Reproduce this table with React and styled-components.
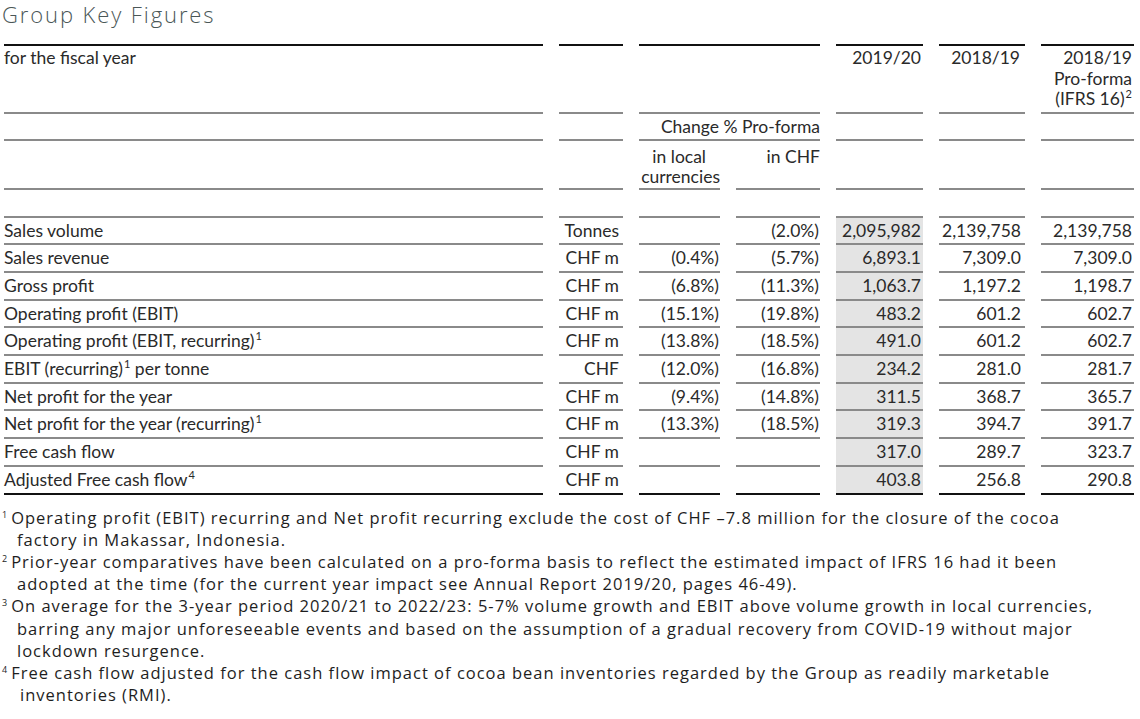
import styled, { createGlobalStyle } from "styled-components";

const GlobalStyle = createGlobalStyle`
  html, body {
    margin: 0;
    padding: 0;
    background: #ffffff;
  }
`;

const Page = styled.div`
  width: 1140px;
  padding: 0 0 0 2px;
  box-sizing: border-box;
  color: #222;
`;

const Title = styled.h1`
  margin: 0 0 16px 0;
  font-family: "Open Sans", "Noto Sans", sans-serif;
  font-weight: 300;
  font-size: 22px;
  line-height: 28px;
  color: #4a5757;
  letter-spacing: 1.9px;
`;

const Table = styled.table`
  border-collapse: separate;
  border-spacing: 16px 0;
  margin-left: -14px;
  table-layout: fixed;
  width: 1162px;
  font-family: Lato, "Open Sans", sans-serif;
  font-size: 17.5px;
  color: #2a2a2a;
`;

const Cell = styled.td`
  padding: 0;
  text-align: ${({ $align }) => $align || "right"};
  vertical-align: ${({ $valign }) => $valign || "middle"};
  line-height: 25.7px;
  white-space: nowrap;
  border-bottom: 2px solid ${({ $last }) => ($last ? "#111" : "#8a8a8a")};
  border-top: ${({ $first }) => ($first ? "2px solid #111" : "0")};
  background: ${({ $shade }) => ($shade ? "#e4e4e4" : "transparent")};
  padding-right: ${({ $pr }) => $pr || "0"};
`;

const HeadCell = styled(Cell)`
  line-height: 20.5px;
  padding-top: ${({ $pt }) => $pt || "0"};
  padding-bottom: ${({ $pb }) => $pb || "0"};
  height: ${({ $h }) => $h || "auto"};
  white-space: normal;
`;

const Indent = styled.span`
  margin-right: ${({ $mr }) => $mr};
`;

const Sup = styled.sup`
  font-size: 11px;
  line-height: 0;
  vertical-align: 7px;
  margin-left: 1px;
`;

const Notes = styled.div`
  margin-top: 12px;
  font-family: "Open Sans", "Noto Sans", sans-serif;
  font-size: 16.5px;
  letter-spacing: 1px;
  line-height: 22.2px;
  color: #1e1e1e;
`;

const Note = styled.div`
  padding-left: ${({ $indent }) => $indent || "15px"};
`;

const NoteLine = styled.div`
  white-space: nowrap;
  margin-left: ${({ $first, $indent }) => ($first ? `-${$indent || "15px"}` : "0")};
`;

const NoteMark = styled.sup`
  font-size: 9px;
  letter-spacing: 0;
  line-height: 0;
  vertical-align: 6px;
  margin-right: 4px;
`;

const rows = [
  ["Sales volume", null, "Tonnes", "", "(2.0%)", "2,095,982", "2,139,758", "2,139,758"],
  ["Sales revenue", null, "CHF m", "(0.4%)", "(5.7%)", "6,893.1", "7,309.0", "7,309.0"],
  ["Gross profit", null, "CHF m", "(6.8%)", "(11.3%)", "1,063.7", "1,197.2", "1,198.7"],
  ["Operating profit (EBIT)", null, "CHF m", "(15.1%)", "(19.8%)", "483.2", "601.2", "602.7"],
  ["Operating profit (EBIT, recurring)", "1", "CHF m", "(13.8%)", "(18.5%)", "491.0", "601.2", "602.7"],
  ["EBIT (recurring)", "1", "CHF", "(12.0%)", "(16.8%)", "234.2", "281.0", "281.7", " per tonne"],
  ["Net profit for the year", null, "CHF m", "(9.4%)", "(14.8%)", "311.5", "368.7", "365.7"],
  ["Net profit for the year (recurring)", "1", "CHF m", "(13.3%)", "(18.5%)", "319.3", "394.7", "391.7"],
  ["Free cash flow", null, "CHF m", "", "", "317.0", "289.7", "323.7"],
  ["Adjusted Free cash flow", "4", "CHF m", "", "", "403.8", "256.8", "290.8"],
];

const notes = [
  {
    n: "1",
    lines: [
      "Operating profit (EBIT) recurring and Net profit recurring exclude the cost of CHF –7.8 million for the closure of the cocoa",
      "factory in Makassar, Indonesia.",
    ],
  },
  {
    n: "2",
    lines: [
      "Prior-year comparatives have been calculated on a pro-forma basis to reflect the estimated impact of IFRS 16 had it been",
      "adopted at the time (for the current year impact see Annual Report 2019/20, pages 46-49).",
    ],
  },
  {
    n: "3",
    lines: [
      "On average for the 3-year period 2020/21 to 2022/23: 5-7% volume growth and EBIT above volume growth in local currencies,",
      "barring any major unforeseeable events and based on the assumption of a gradual recovery from COVID-19 without major",
      "lockdown resurgence.",
    ],
  },
  {
    n: "4",
    indent: "18px",
    lines: [
      "Free cash flow adjusted for the cash flow impact of cocoa bean inventories regarded by the Group as readily marketable",
      "inventories (RMI).",
    ],
  },
];

export default function App() {
  return (
    <>
      <GlobalStyle />
      <Page>
        <Title>Group Key Figures</Title>
        <Table>
          <colgroup>
            <col style={{ width: 539 }} />
            <col style={{ width: 64 }} />
            <col style={{ width: 81 }} />
            <col style={{ width: 84 }} />
            <col style={{ width: 87 }} />
            <col style={{ width: 86 }} />
            <col style={{ width: 93 }} />
          </colgroup>
          <tbody>
            <tr>
              <HeadCell $first $align="left" $valign="top" $pt="2px" $pb="2px">
                for the fiscal year
              </HeadCell>
              <HeadCell $first />
              <HeadCell $first colSpan={2} />
              <HeadCell $first $valign="top" $pt="2px" $pr="2px">2019/20</HeadCell>
              <HeadCell $first $valign="top" $pt="2px" $pr="5px">2018/19</HeadCell>
              <HeadCell $first $valign="top" $pt="2px" $pb="2px" $pr="2px">
                2018/19
                <br />
                Pro-forma
                <br />
                (IFRS 16)<Sup>2</Sup>
              </HeadCell>
            </tr>
            <tr>
              <HeadCell $h="25px" />
              <HeadCell />
              <HeadCell colSpan={2} $pt="3px">Change % Pro-forma</HeadCell>
              <HeadCell />
              <HeadCell />
              <HeadCell />
            </tr>
            <tr>
              <HeadCell $h="47px" />
              <HeadCell />
              <HeadCell $valign="top" $pt="6px">
                <Indent $mr="14px">in local</Indent>
                <br />
                currencies
              </HeadCell>
              <HeadCell $valign="top" $pt="6px">in CHF</HeadCell>
              <HeadCell />
              <HeadCell />
              <HeadCell />
            </tr>
            <tr>
              <HeadCell $h="26px" />
              <HeadCell />
              <HeadCell />
              <HeadCell />
              <HeadCell />
              <HeadCell />
              <HeadCell />
            </tr>
            {rows.map((r, i) => {
              const last = i === rows.length - 1;
              return (
                <tr key={r[0] + i}>
                  <Cell $align="left" $last={last}>
                    {r[0]}
                    {r[1] && <Sup>{r[1]}</Sup>}
                    {r[8]}
                  </Cell>
                  <Cell $last={last} $pr="4px">{r[2]}</Cell>
                  <Cell $last={last} $pr="1px">{r[3]}</Cell>
                  <Cell $last={last} $pr="1px">{r[4]}</Cell>
                  <Cell $last={last} $shade $pr="2px">{r[5]}</Cell>
                  <Cell $last={last} $pr="4px">{r[6]}</Cell>
                  <Cell $last={last} $pr="2px">{r[7]}</Cell>
                </tr>
              );
            })}
          </tbody>
        </Table>
        <Notes>
          {notes.map((note) => (
            <Note key={note.n} $indent={note.indent}>
              {note.lines.map((line, j) => (
                <NoteLine key={j} $first={j === 0} $indent={note.indent}>
                  {j === 0 && <NoteMark>{note.n}</NoteMark>}
                  {line}
                </NoteLine>
              ))}
            </Note>
          ))}
        </Notes>
      </Page>
    </>
  );
}
